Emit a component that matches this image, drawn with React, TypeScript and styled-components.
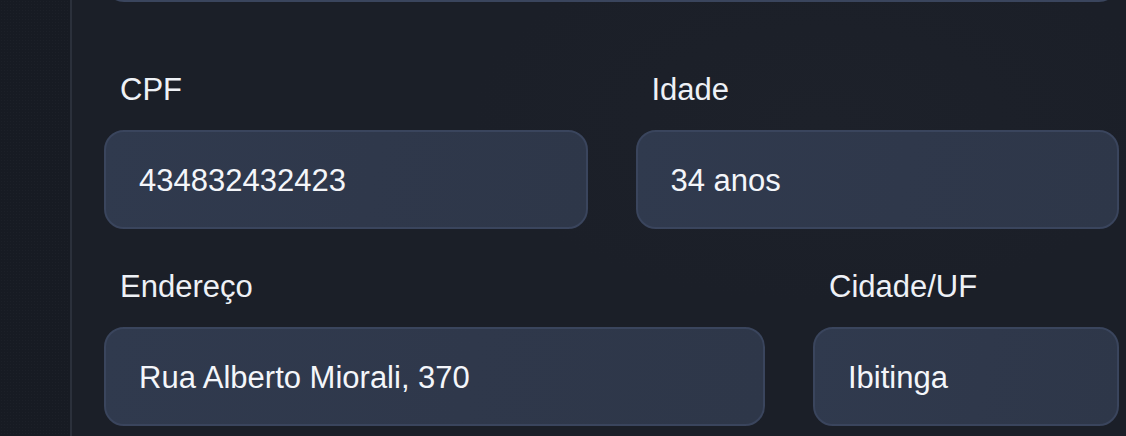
import React from "react";
import styled, { createGlobalStyle } from "styled-components";

const Global = createGlobalStyle`
  html, body {
    margin: 0;
    padding: 0;
    background: #1b1f28;
    font-family: "Liberation Sans", Arial, sans-serif;
  }
  * { box-sizing: border-box; }
`;

const Page = styled.div`
  display: flex;
  width: 1126px;
  height: 436px;
  overflow: hidden;
  background: radial-gradient(ellipse 500px 260px at 820px 120px, #1d212a 0%, #1b1f28 70%), #1b1f28;
`;

const Sidebar = styled.aside`
  flex: 0 0 72px;
  height: 100%;
  background-color: #171b23;
  background-image: radial-gradient(circle, rgba(255, 255, 255, 0.025) 1px, transparent 1px);
  background-size: 3px 3px;
  border-right: 2px solid #2b303b;
`;

const Main = styled.main`
  flex: 1;
  display: flex;
  flex-direction: column;
  padding: 0 7px 0 32px;
  overflow: hidden;
`;

const Section = styled.div<{ $top?: number; $cols: string; $gap: number }>`
  display: grid;
  grid-template-columns: ${(p) => p.$cols};
  column-gap: ${(p) => p.$gap}px;
  margin-top: ${(p) => p.$top ?? 0}px;
`;

const Field = styled.div`
  display: flex;
  flex-direction: column;
  gap: 22px;
  min-width: 0;
`;

const Label = styled.label`
  display: block;
  padding-left: 16px;
  font-size: 31px;
  line-height: 36px;
  color: #eef1f6;
`;

const Box = styled.div`
  height: 99px;
  display: flex;
  align-items: center;
  padding: 2px 32px 0 33px;
  border: 2px solid #3a455d;
  border-radius: 20px;
  background: linear-gradient(100deg, #303a4e 0%, #2f384b 55%, #2e3749 100%);
  font-size: 31px;
  color: #f4f6fa;
  white-space: nowrap;
  overflow: hidden;
`;

const PrevBox = styled(Box)`
  margin-top: -97px;
`;

export default function App() {
  return (
    <>
      <Global />
      <Page>
        <Sidebar />
        <Main>
          <PrevBox aria-hidden />
          <Section $cols="1fr 1fr" $gap={48} $top={70}>
            <Field>
              <Label>CPF</Label>
              <Box>434832432423</Box>
            </Field>
            <Field>
              <Label>Idade</Label>
              <Box>34 anos</Box>
            </Field>
          </Section>
          <Section $cols="1fr 306px" $gap={48} $top={40}>
            <Field>
              <Label>Endereço</Label>
              <Box>Rua Alberto Miorali, 370</Box>
            </Field>
            <Field>
              <Label>Cidade/UF</Label>
              <Box>Ibitinga</Box>
            </Field>
          </Section>
        </Main>
      </Page>
    </>
  );
}
